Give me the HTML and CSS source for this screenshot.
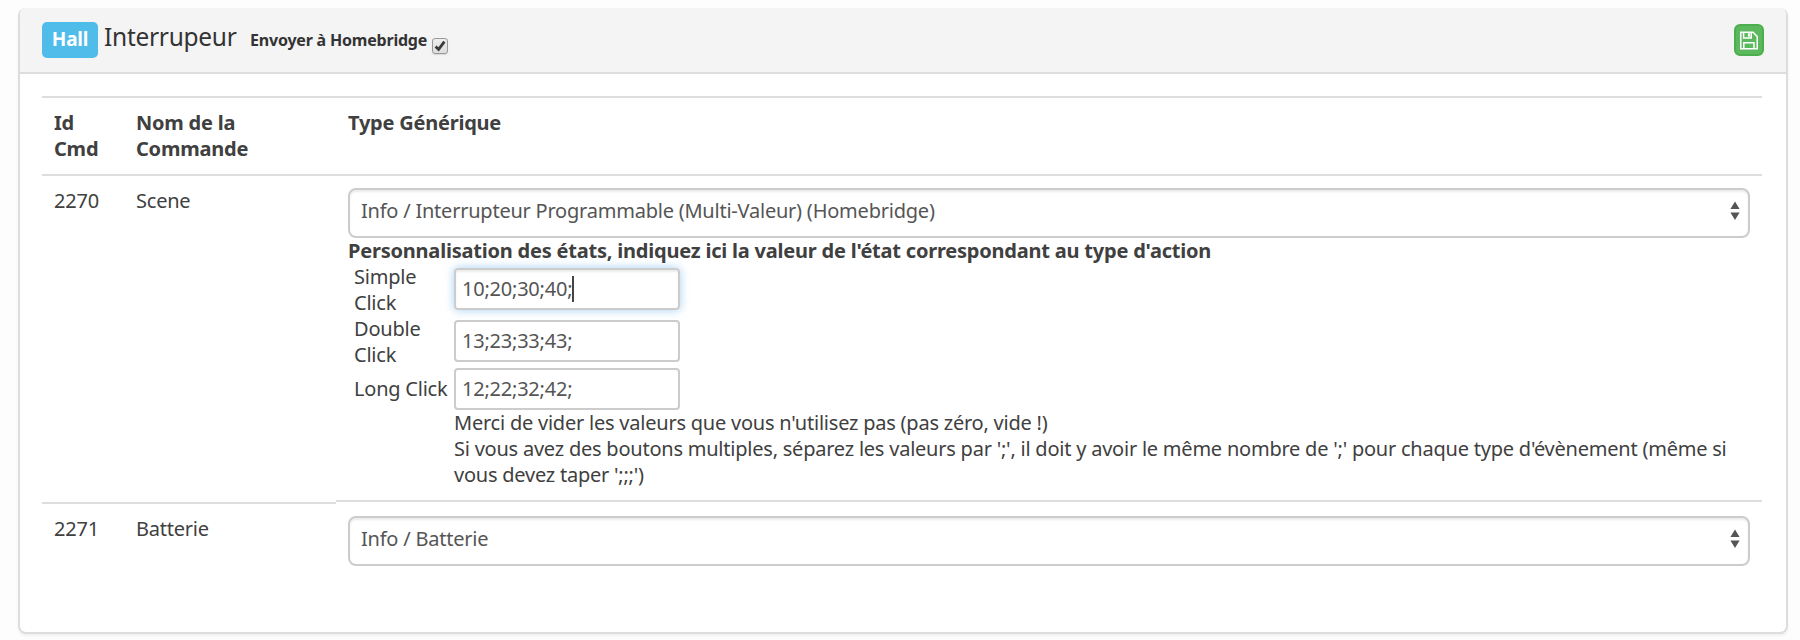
FILE: index.html
```html
<!DOCTYPE html>
<html lang="fr">
<head>
<meta charset="utf-8">
<title>Homebridge</title>
<link rel="stylesheet" href="styles.css">
</head>
<body>
<section class="panel">
  <header class="panel-heading">
    <span class="label">Hall</span>
    <span class="title">Interrupeur</span>
    <label class="send" for="send">Envoyer à Homebridge</label>
    <span class="check" id="send"><svg width="12" height="12" viewBox="0 0 12 12"><path d="M1.6 6.4 4.6 9.4 10.4 1.6" fill="none" stroke="#3c3c3c" stroke-width="2.8"/></svg></span>
    <button class="save" aria-label="Sauvegarder"><svg width="18" height="19" viewBox="0 0 18 19" fill="none" stroke="#fff" stroke-width="1.5"><path d="M.8 1.3H13L17.2 5.5V17.7H.8Z"/><path d="M3.6 1.3V7H11.2V1.3M3.8 17.7V11.8H14V17.7"/><path d="M8.9 2.2V5.8" stroke-width="2"/></svg></button>
  </header>
  <div class="table">
    <div class="row head">
      <div class="cell">Id<br>Cmd</div>
      <div class="cell">Nom de la<br>Commande</div>
      <div class="cell">Type Générique</div>
    </div>
    <div class="row">
      <div class="cell">2270</div>
      <div class="cell">Scene</div>
      <div class="cell">
        <div class="select"><span>Info / Interrupteur Programmable (Multi-Valeur) (Homebridge)</span><svg class="arrows" width="10" height="20" viewBox="0 0 10 20"><path d="M.4 8 5 .6 9.6 8ZM.4 11.5H9.6L5 19Z" fill="#555"/></svg></div>
        <div class="strong">Personnalisation des états, indiquez ici la valeur de l'état correspondant au type d'action</div>
        <div class="states">
          <div class="name">Simple<br>Click</div>
          <div class="input focus"><span>10;20;30;40;</span><i class="caret"></i></div>
          <div class="name">Double<br>Click</div>
          <div class="input"><span>13;23;33;43;</span></div>
          <div class="name">Long Click</div>
          <div class="input last"><span>12;22;32;42;</span></div>
          <div class="note">Merci de vider les valeurs que vous n'utilisez pas (pas zéro, vide !)<br>Si vous avez des boutons multiples, séparez les valeurs par ';', il doit y avoir le même nombre de ';' pour chaque type d'évènement (même si<br>vous devez taper ';;;')</div>
        </div>
      </div>
    </div>
    <div class="row battery">
      <div class="cell">2271</div>
      <div class="cell">Batterie</div>
      <div class="cell">
        <div class="select"><span>Info / Batterie</span><svg class="arrows" width="10" height="20" viewBox="0 0 10 20"><path d="M.4 8 5 .6 9.6 8ZM.4 11.5H9.6L5 19Z" fill="#555"/></svg></div>
      </div>
    </div>
  </div>
</section>
</body>
</html>
```
FILE: styles.css
```css
* { box-sizing: border-box; }
body {
  margin: 0;
  padding: 8px 12px 6px 18px;
  height: 640px;
  background: #fdfdfd;
  color: #404040;
  font: 20px/26px "Noto Sans", sans-serif;
  letter-spacing: -.225px;
  overflow: hidden;
}
.panel {
  height: 626px;
  background: #fff;
  border: 2px solid #ddd;
  border-top: 0;
  border-radius: 8px;
  box-shadow: 0 2px 3px rgba(0, 0, 0, .05);
}
.panel-heading {
  display: flex;
  align-items: flex-start;
  height: 66px;
  padding: 0 22px;
  background: #f4f4f4;
  border-bottom: 2px solid #ddd;
  border-radius: 6px 6px 0 0;
  color: #333;
  white-space: nowrap;
}
.label {
  width: 56px;
  height: 36px;
  margin-top: 14px;
  border-radius: 5px;
  background: #4fbce9;
  color: #fff;
  font-size: 19px;
  font-weight: bold;
  line-height: 34px;
  text-align: center;
}
.title {
  width: 146px;
  margin: 12px 0 0 6px;
  font-size: 24.5px;
  letter-spacing: -.28px;
  line-height: 34px;
}
.send {
  width: 182px;
  margin-top: 19px;
  font-size: 16px;
  font-weight: bold;
  letter-spacing: -.2px;
  line-height: 26px;
}
.check {
  display: flex;
  width: 16px;
  height: 16px;
  margin-top: 30px;
  border: 1px solid #999;
  border-radius: 3px;
  background: linear-gradient(#eee, #ddd);
  box-shadow: 0 1px 1px rgba(0, 0, 0, .12);
  padding: 1px;
}
.save {
  display: flex;
  align-items: center;
  justify-content: center;
  width: 30px;
  height: 32px;
  margin: 16px 0 0 auto;
  padding: 0;
  border: 2px solid #4cae4c;
  border-radius: 6px;
  background: #5cb85c;
}
.table { padding: 22px 24px 0 22px; }
.row {
  display: grid;
  grid-template-columns: 82px 212px minmax(0, 1fr);
}
.cell {
  padding: 12px;
  border-top: 2px solid #ddd;
  white-space: nowrap;
}
.head, .strong { font-weight: bold; }
.strong { letter-spacing: -.21px; }
.battery .cell { margin-top: 2px; }
.battery .cell:last-child { margin-top: 0; padding-top: 14px; }
.select {
  display: flex;
  justify-content: space-between;
  height: 50px;
  padding: 8px 8px 0 11px;
  border: 2px solid #ccc;
  border-radius: 8px;
  box-shadow: inset 0 2px 2px rgba(0, 0, 0, .075);
  color: #555;
}
.arrows { margin-top: 3px; }
.states {
  display: grid;
  grid-template-columns: 100px minmax(0, 1fr);
  grid-template-rows: 52px 52px 42px auto;
  align-items: center;
  padding-left: 6px;
}
.input {
  display: flex;
  align-items: center;
  width: 226px;
  height: 42px;
  margin-top: -2px;
  padding: 0 6px;
  border: 2px solid #ccc;
  border-radius: 4px;
  color: #555;
}
.input.last { margin-top: 0; }
.focus { box-shadow: inset 0 2px 2px rgba(0, 0, 0, .075), 0 0 10px rgba(102, 175, 233, .6); }
.caret { width: 2px; height: 26px; background: #444; }
.note { grid-column: 2; }
```
